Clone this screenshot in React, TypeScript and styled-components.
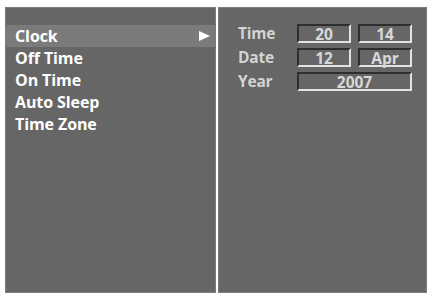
import React from 'react'
import styled, { createGlobalStyle } from 'styled-components'

const GlobalStyle = createGlobalStyle`
    html, body {
        margin: 0;
        padding: 0;
        background: #ffffff;
    }
    body {
        font-family: 'Open Sans', 'Liberation Sans', sans-serif;
    }
`

const menuItems = ['Clock', 'Off Time', 'On Time', 'Auto Sleep', 'Time Zone']

const App: React.FC = () => {
    return (
        <>
            <GlobalStyle />
            <Screen>
                <MenuPanel>
                    <MenuList>
                        {menuItems.map((item, i) => (
                            <MenuRow key={item} active={i === 0}>
                                <span>{item}</span>
                                {i === 0 && (
                                    <Arrow width="11" height="10" viewBox="0 0 11 10">
                                        <polygon points="0,0 11,5 0,10" fill="#ffffff" />
                                    </Arrow>
                                )}
                            </MenuRow>
                        ))}
                    </MenuList>
                </MenuPanel>
                <Divider />
                <DetailPanel>
                    <FieldGrid>
                        <Label>Time</Label>
                        <ValueBox>20</ValueBox>
                        <ValueBox>14</ValueBox>
                        <Label>Date</Label>
                        <ValueBox>12</ValueBox>
                        <ValueBox>Apr</ValueBox>
                        <Label>Year</Label>
                        <ValueBox wide>2007</ValueBox>
                    </FieldGrid>
                </DetailPanel>
            </Screen>
        </>
    )
}

export default App

const Screen = styled.div`
    display: flex;
    width: 428px;
    height: 295px;
    box-sizing: border-box;
    padding: 7px 1px 2px 5px;
`

const Panel = styled.div`
    background: #666666;
    border: 1px solid #7c7c7c;
    box-sizing: border-box;
    height: 100%;
`

const MenuPanel = styled(Panel)`
    width: 211px;
    padding-top: 17px;
`

const Divider = styled.div`
    width: 2px;
    background: #ffffff;
`

const DetailPanel = styled(Panel)`
    flex: 1;
    padding: 16px 0 0 19px;
`

const MenuList = styled.div`
    display: flex;
    flex-direction: column;
`

const MenuRow = styled.div<{ active?: boolean }>`
    display: flex;
    align-items: center;
    justify-content: space-between;
    height: 22px;
    padding: 0 5px 0 9px;
    background: ${(p) => (p.active ? '#7b7b7b' : 'transparent')};
    color: #ffffff;
    font-weight: 700;
    font-size: 16px;
    letter-spacing: -0.1px;
`

const Arrow = styled.svg`
    display: block;
`

const FieldGrid = styled.div`
    display: grid;
    grid-template-columns: 52px 54px 54px;
    grid-auto-rows: 19px;
    column-gap: 7px;
    row-gap: 5px;
    align-items: center;
`

const Label = styled.div`
    color: #d4d4d4;
    font-weight: 700;
    font-size: 15.5px;
    letter-spacing: -0.2px;
    margin-top: -2px;
`

const ValueBox = styled.div<{ wide?: boolean }>`
    grid-column: ${(p) => (p.wide ? 'span 2' : 'auto')};
    height: 19px;
    box-sizing: border-box;
    display: flex;
    align-items: center;
    justify-content: center;
    border-top: 2px solid #2e2e2e;
    border-left: 2px solid #2e2e2e;
    border-bottom: 2px solid #e2e2e2;
    border-right: 2px solid #e2e2e2;
    color: #d8d8d8;
    font-weight: 700;
    font-size: 15.5px;
`
